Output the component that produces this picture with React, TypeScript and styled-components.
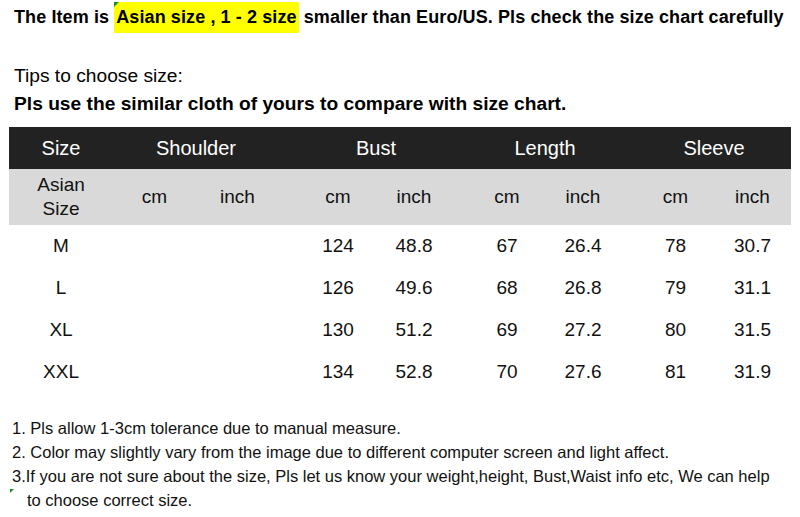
import styled, { createGlobalStyle } from 'styled-components';

const GlobalStyle = createGlobalStyle`
  html, body {
    margin: 0;
    padding: 0;
    background: #fff;
  }
  body {
    font-family: 'Liberation Sans', Arial, sans-serif;
    color: #000;
  }
`;

interface Group {
  name: string;
  width: number;
  gap: number;
}

const groups: Group[] = [
  { name: 'Shoulder', width: 83, gap: 0 },
  { name: 'Bust', width: 76, gap: 21 },
  { name: 'Length', width: 76, gap: 17 },
  { name: 'Sleeve', width: 77, gap: 16 },
];

const rows = [
  { size: 'M', values: ['', '', '124', '48.8', '67', '26.4', '78', '30.7'] },
  { size: 'L', values: ['', '', '126', '49.6', '68', '26.8', '79', '31.1'] },
  { size: 'XL', values: ['', '', '130', '51.2', '69', '27.2', '80', '31.5'] },
  { size: 'XXL', values: ['', '', '134', '52.8', '70', '27.6', '81', '31.9'] },
];

const App = () => {
  return (
    <Page>
      <GlobalStyle />
      <Title>
        The Item is{' '}
        <Highlight>
          <Marker />
          Asian size , 1 - 2 size
        </Highlight>{' '}
        smaller than Euro/US. Pls check the size chart carefully
      </Title>

      <Tips>Tips to choose size:</Tips>
      <Advice>Pls use the similar cloth of yours to compare with size chart.</Advice>

      <Table>
        <HeadRow>
          <SizeCell>Size</SizeCell>
          {groups.map((g) => (
            <GroupCell key={g.name} $width={g.width * 2} $gap={g.gap}>
              {g.name}
            </GroupCell>
          ))}
        </HeadRow>

        <UnitRow>
          <SizeCell>
            Asian
            <br />
            Size
          </SizeCell>
          {groups.map((g) => (
            <Pair key={g.name} $gap={g.gap}>
              <Cell $width={g.width}>cm</Cell>
              <Cell $width={g.width}>inch</Cell>
            </Pair>
          ))}
        </UnitRow>

        {rows.map((row) => (
          <DataRow key={row.size}>
            <SizeCell>{row.size}</SizeCell>
            {groups.map((g, i) => (
              <Pair key={g.name} $gap={g.gap}>
                <Cell $width={g.width}>{row.values[i * 2]}</Cell>
                <Cell $width={g.width}>{row.values[i * 2 + 1]}</Cell>
              </Pair>
            ))}
          </DataRow>
        ))}
      </Table>

      <Notes>
        <Note>1. Pls allow 1-3cm tolerance due to manual measure.</Note>
        <Note>2. Color may slightly vary from the image due to different computer screen and light affect.</Note>
        <Note>
          3.If you are not sure about the size, Pls let us know your weight,height, Bust,Waist info etc, We can help
        </Note>
        <Note $indent>
          <SideMarker />
          to choose correct size.
        </Note>
      </Notes>
    </Page>
  );
};

export default App;

const Page = styled.div`
  width: 800px;
  height: 517px;
  overflow: hidden;
  display: flex;
  flex-direction: column;
`;

const Title = styled.div`
  margin-top: 2px;
  padding-left: 14px;
  height: 30px;
  line-height: 31px;
  font-size: 18px;
  letter-spacing: 0.1px;
  font-weight: bold;
  white-space: nowrap;
`;

const Highlight = styled.span`
  position: relative;
  display: inline-block;
  background: #ffff00;
  padding: 0 2px;
`;

const Marker = styled.span`
  position: absolute;
  left: 0;
  top: 0;
  width: 0;
  height: 0;
  border-top: 5px solid #1f8a1f;
  border-right: 5px solid transparent;
`;

const Tips = styled.div`
  margin-top: 31px;
  padding-left: 14px;
  font-size: 19.2px;
  line-height: 26px;
`;

const Advice = styled.div`
  padding-left: 14px;
  font-size: 19.2px;
  font-weight: bold;
  line-height: 29px;
`;

const Table = styled.div`
  margin: 9px 0 0 9px;
  width: 782px;
  display: flex;
  flex-direction: column;
`;

const Row = styled.div`
  display: flex;
  align-items: center;
  font-size: 19px;
`;

const HeadRow = styled(Row)`
  height: 42px;
  background: #222222;
  color: #fff;
  font-size: 20px;
`;

const UnitRow = styled(Row)`
  height: 56px;
  background: #d9d9d9;
  color: #111;
`;

const DataRow = styled(Row)`
  height: 42px;
  color: #111;
`;

const SizeCell = styled.div`
  width: 104px;
  text-align: center;
  line-height: 24px;
`;

const GroupCell = styled.div<{ $width: number; $gap: number }>`
  width: ${(p) => p.$width}px;
  margin-left: ${(p) => p.$gap}px;
  text-align: center;
`;

const Pair = styled.div<{ $gap: number }>`
  display: flex;
  margin-left: ${(p) => p.$gap}px;
`;

const Cell = styled.div<{ $width: number }>`
  width: ${(p) => p.$width}px;
  text-align: center;
`;

const Notes = styled.div`
  margin-top: 23px;
  padding-left: 12px;
  font-size: 16.5px;
  line-height: 24px;
  color: #111;
`;

const Note = styled.div<{ $indent?: boolean }>`
  position: relative;
  white-space: nowrap;
  padding-left: ${(p) => (p.$indent ? '15px' : '0')};
`;

const SideMarker = styled.span`
  position: absolute;
  left: -2px;
  top: 1px;
  width: 0;
  height: 0;
  border-top: 4px solid #1f8a1f;
  border-right: 4px solid transparent;
`;
